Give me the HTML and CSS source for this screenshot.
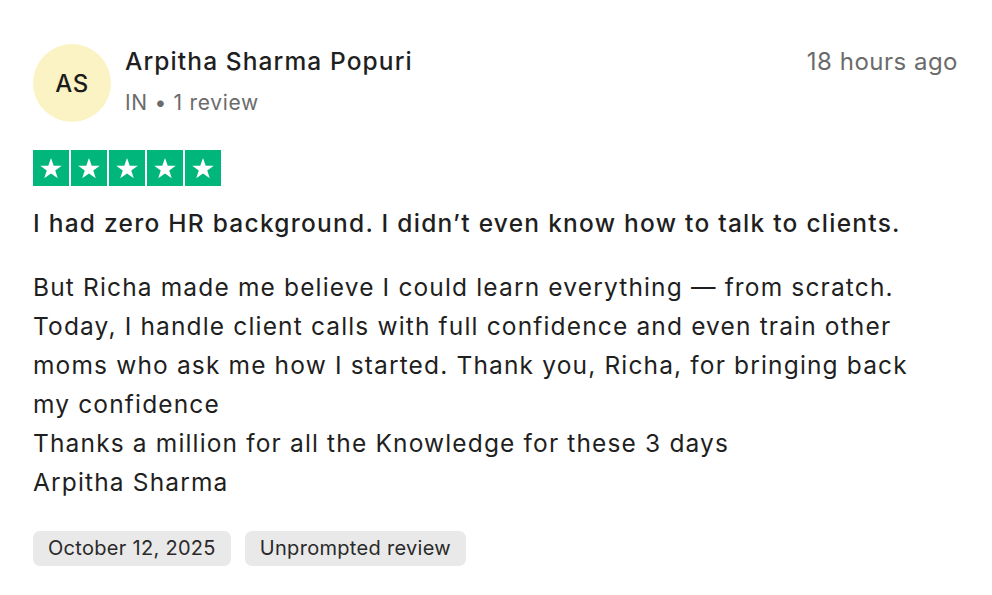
FILE: index.html
```html
<!DOCTYPE html>
<html lang="en">
<head>
<meta charset="utf-8">
<title>Review</title>
<link rel="stylesheet" href="styles.css">
</head>
<body>
<article class="card">
  <header class="head">
    <div class="avatar">AS</div>
    <div class="who">
      <div class="name">Arpitha Sharma Popuri</div>
      <div class="meta">IN • 1 review</div>
    </div>
    <div class="time">18 hours ago</div>
  </header>
  <div class="stars">
    <span class="star"><svg viewBox="0 0 24 24"><path d="M12 3.5l2.35 6.6h6.9l-5.6 4.1 2.15 6.6L12 16.75 6.2 20.8l2.15-6.6-5.6-4.1h6.9z" fill="#fff"/></svg></span>
    <span class="star"><svg viewBox="0 0 24 24"><path d="M12 3.5l2.35 6.6h6.9l-5.6 4.1 2.15 6.6L12 16.75 6.2 20.8l2.15-6.6-5.6-4.1h6.9z" fill="#fff"/></svg></span>
    <span class="star"><svg viewBox="0 0 24 24"><path d="M12 3.5l2.35 6.6h6.9l-5.6 4.1 2.15 6.6L12 16.75 6.2 20.8l2.15-6.6-5.6-4.1h6.9z" fill="#fff"/></svg></span>
    <span class="star"><svg viewBox="0 0 24 24"><path d="M12 3.5l2.35 6.6h6.9l-5.6 4.1 2.15 6.6L12 16.75 6.2 20.8l2.15-6.6-5.6-4.1h6.9z" fill="#fff"/></svg></span>
    <span class="star"><svg viewBox="0 0 24 24"><path d="M12 3.5l2.35 6.6h6.9l-5.6 4.1 2.15 6.6L12 16.75 6.2 20.8l2.15-6.6-5.6-4.1h6.9z" fill="#fff"/></svg></span>
  </div>
  <h2 class="title">I had zero HR background. I didn’t even know how to talk to clients.</h2>
  <p class="text">But Richa made me believe I could learn everything — from scratch. Today, I handle client calls with full confidence and even train other moms who ask me how I started. Thank you, Richa, for bringing back my confidence<br>Thanks a million for all the Knowledge for these 3 days<br>Arpitha Sharma</p>
  <div class="tags">
    <span class="tag">October 12, 2025</span>
    <span class="tag">Unprompted review</span>
  </div>
</article>
</body>
</html>
```
FILE: styles.css
```css
html, body {
  margin: 0;
  background: #fff;
}
body {
  font-family: Inter, "Noto Sans", sans-serif;
  color: #1f1f1f;
}
.card {
  padding: 44px 33px 0 33px;
}
.head {
  display: flex;
  align-items: flex-start;
}
.avatar {
  width: 78px;
  height: 78px;
  border-radius: 50%;
  background: #fcf3c4;
  display: flex;
  align-items: center;
  justify-content: center;
  font-size: 24px;
  font-weight: 500;
  letter-spacing: 0.5px;
  color: #1c1c1c;
  flex: none;
}
.who {
  margin-left: 14px;
  flex: 1;
}
.name {
  font-size: 24.5px;
  font-weight: 500;
  line-height: 32px;
  letter-spacing: 1.1px;
  margin-top: 1px;
}
.meta {
  font-size: 21px;
  color: #6b6b6b;
  line-height: 30px;
  letter-spacing: 0.7px;
  margin-top: 11px;
}
.time {
  font-size: 24px;
  color: #6b6b6b;
  line-height: 32px;
  letter-spacing: 0.5px;
  margin-top: 2px;
  margin-right: 1px;
}
.stars {
  display: flex;
  gap: 2px;
  margin-top: 28px;
}
.star {
  width: 36px;
  height: 36px;
  background: #00b67a;
  display: flex;
  align-items: center;
  justify-content: center;
}
.star svg {
  width: 28px;
  height: 28px;
}
.title {
  font-size: 24.5px;
  font-weight: 500;
  line-height: 34px;
  letter-spacing: 1.25px;
  margin: 20px 0 0 0;
}
.text {
  font-size: 24.5px;
  line-height: 39px;
  letter-spacing: 1.15px;
  margin: 28px 0 0 0;
  max-width: 915px;
}
.tags {
  display: flex;
  gap: 14px;
  margin-top: 29px;
}
.tag {
  background: #e9e9e9;
  border-radius: 7px;
  font-size: 20px;
  line-height: 35px;
  letter-spacing: 0.3px;
  padding: 0 15px;
  color: #2a2a2a;
}
```
